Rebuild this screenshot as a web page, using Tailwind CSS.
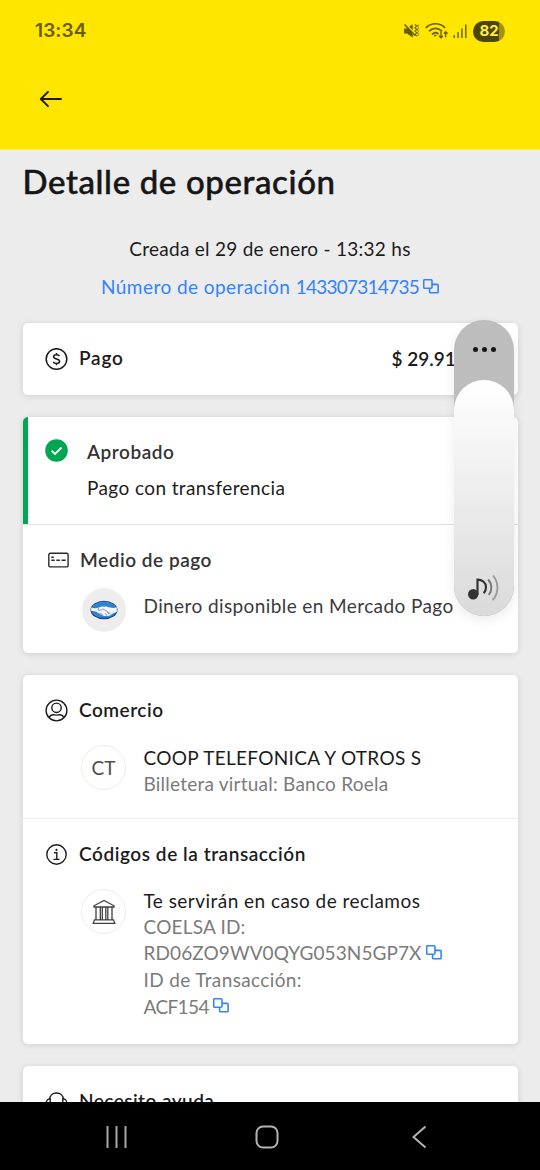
<!DOCTYPE html>
<html lang="es">
<head>
<meta charset="utf-8">
<title>Detalle de operación</title>
<script src="https://cdn.jsdelivr.net/npm/@tailwindcss/browser@4"></script>
</head>
<body class="bg-black">
<svg class="hidden">
  <symbol id="copy" viewBox="0 0 16 15"><path d="M1.600.8h6.500q.9 0 .9.900v6.600q0 .9-.9.900H1.600q-.9 0-.9-.9V1.700q0-.9.900-.9zM9 5.400h5.200q.9 0 .9.900v6.600q0 .9-.9.900H7.500q-.9 0-.9-.9V9.200" fill="none" stroke="currentColor" stroke-width="1.600"/></symbol>
</svg>
<div class="relative flex h-[1170px] w-[540px] flex-col overflow-hidden bg-[#ececec] font-['Lato',sans-serif] text-[19px] text-[#1c1c1c]">
  <header class="h-[150px] shrink-0 border-b border-[#fbeb62] bg-[#ffe600]">
    <div class="flex h-[62px] items-center justify-between px-[35px] text-[#665c00]">
      <span class="pt-px font-['Inter',sans-serif] text-[19px] font-semibold tracking-[0.100px]">13:34</span>
      <div class="flex items-center">
        <svg class="h-[18px] w-[70px]" viewBox="403 22 70 18" fill="none" stroke="#665c00">
          <path d="M404 28.500h3l3.500-2.700 2.200-1.500v13.500l-5.700-4.300h-3z" fill="#665c00" stroke="none"/>
          <path d="M404 22.500l14 14" stroke="#ffe600" stroke-width="1.500"/>
          <path d="M404.500 24.500l10.500 11" stroke-width="1.500"/>
          <path d="M415 24.500l1.800 1.500-1.800 1.700 1.800 1.700-1.800 1.700 1.800 1.700-1.800 1.700 1.800 1.700" stroke-width="1.100"/>
          <path d="M418.600 24.500l-1 1.500 1 1.700-1 1.700 1 1.700-1 1.700 1 1.700-1 1.700" stroke-width=".8"/>
          <path d="M426.500 27.300c5-4.700 13-4.700 18 0M429.500 30.800c3.500-3.200 8.500-3.200 12 0M432.500 34c2-1.600 4-1.600 5.500-.3" stroke-width="1.700" stroke-linecap="round"/>
          <path d="M441 31.500v6.300m-1.900-2 1.900 2 1.900-2M445.700 37.200v-5.400m-1.900 2 1.900-2 1.900 2" stroke-width="1.300"/>
          <path d="M434 35.500h2.300" stroke-width="1.600"/>
          <path d="M454.200 35v3M458 32v6M461.900 28.500v9.500M465.800 24.500v13.500" stroke-width="1.400"/>
        </svg>
        <div class="flex h-[21px] w-[32px] items-center justify-center overflow-hidden rounded-full bg-linear-to-r from-[#4d4500] from-80% to-[#a39300] to-80% font-['Inter',sans-serif] text-[15px] font-bold text-[#ffed4a]"><span>82</span></div>
      </div>
    </div>
    <svg class="ml-[39px] mt-[27px] h-5 w-6" viewBox="0 0 24 20" fill="none" stroke="#1d1a05" stroke-width="1.900" stroke-linecap="round" stroke-linejoin="round"><path d="M22 10H2M9 2.800L1.800 10 9 17.200"/></svg>
  </header>

  <main class="flex h-[952px] shrink-0 flex-col overflow-hidden px-[22.500px]">
    <h1 class="flex h-[62px] shrink-0 items-center pt-[2px] text-[33px] font-medium tracking-[0.620px] text-[#161616] [-webkit-text-stroke:0.500px_#161616]">Detalle de operación</h1>
    <div class="flex h-[111px] shrink-0 flex-col items-center pt-[18px]">
      <p class="flex h-[38px] items-center tracking-[0.270px]">Creada el 29 de enero - 13:32 hs</p>
      <p class="flex h-[38px] items-center gap-[4px] text-[#3483fa]"><span class="tracking-[0.440px]">Número de operación <span class="tracking-[-0.750px]">143307314735</span></span><svg class="mb-0.5 h-[15px] w-4"><use href="#copy"/></svg></p>
    </div>

    <section class="flex h-[72px] shrink-0 items-center rounded-[5px] bg-white pl-[22px] shadow-[0_1px_6px_rgba(0,0,0,0.13)]">
      <svg class="mr-[11.500px] h-[23px] w-[23px]" viewBox="0 0 23 23" fill="none" stroke="#1c1c1c" stroke-width="1.500"><circle cx="11.500" cy="11" r="10.300"/><path d="M14.500 8.100c-.5-1-1.500-1.400-3-1.400-1.700 0-2.900.7-2.900 2 0 3 6 1.400 6 4.500 0 1.400-1.300 2.200-3.100 2.200-1.600 0-2.800-.6-3.200-1.700M11.500 5v2M11.500 15.200v2"/></svg>
      <span class="-mt-px font-semibold tracking-[0.800px]">Pago</span>
      <span class="ml-auto w-[126px] pt-px font-semibold">$ 29.91</span>
    </section>

    <section class="mt-[22px] flex h-[236px] shrink-0 flex-col overflow-hidden rounded-[5px] bg-white shadow-[0_1px_6px_rgba(0,0,0,0.13)]">
      <div class="flex h-[107px] border-l-[5.500px] border-[#00a650] pl-[17px] pt-[16px]">
        <svg class="mr-[19.500px] mt-[6px] h-[23px] w-[23px]" viewBox="0 0 23 23"><circle cx="11.500" cy="11.500" r="11.300" fill="#00a650"/><path d="M6.600 11.700l3.400 3.300 6.500-6.500" fill="none" stroke="#fff" stroke-width="1.800"/></svg>
        <div>
          <p class="flex h-[37px] items-center pt-[2px] font-semibold tracking-[0.550px] text-[#333]">Aprobado</p>
          <p class="flex h-[36px] items-center tracking-[0.400px]">Pago con transferencia</p>
        </div>
      </div>
      <div class="h-[129px] border-t border-[#e4e4e4] pt-[16px]">
        <div class="flex h-[38px] items-center pl-[25.500px]">
          <svg class="mr-[11px] h-4 w-[21px]" viewBox="0 0 21 16" fill="none" stroke="#2b2b2b" stroke-width="1.400"><rect x=".8" y="1.300" width="19.300" height="13.600" rx="1.500"/><path d="M3.300 5.300h2.500M3.300 8.300h3.500M8.300 8.300h3.600M13.500 8.300h4.200"/></svg>
          <span class="font-semibold tracking-[0.530px] text-[#333]">Medio de pago</span>
        </div>
        <div class="flex pl-[59.500px] pt-[8.500px]">
          <div class="mr-[17.500px] flex h-[44px] w-[44px] items-center justify-center rounded-full bg-[#ededed]">
            <svg class="h-[20px] w-[28px]" viewBox="0 0 28 20"><ellipse cx="14" cy="10" rx="13.500" ry="9.300" fill="#24408e"/><ellipse cx="14" cy="9.800" rx="12.600" ry="8.300" fill="#2b84cc"/><path d="M1.200 7.500c3 1.200 5.500 1 8-.2 2-.9 3.200-1 4.800-.5 2.500-.8 4 .2 6 .8 2.300.7 4.500.5 6.800-.3v4.500c-2 .8-4 1.700-6.200 3.200-1.500 1.300-3.500 1-4 .5-1.300 1-3 .6-3.700-.3-1.700.2-2.800-.7-3-1.600-1.500-.2-2.200-.8-3-1.600-1.700-.8-3.500-1-5.700-1z" fill="#f3f5fa"/><path d="M9.200 7.300L8 9.800c1.800 1 3.300.4 4.800-.8 3 1.200 5.500 3 7.800 5M13 15.200c-1-.8-1.500-1.500-2.800-2M15 13.500l2 1.800M17 12.200l2 1.900" fill="none" stroke="#5b6fa8" stroke-width=".7"/></svg>
          </div>
          <span class="flex h-[38px] items-center tracking-[0.400px] text-[#3a3a3a]">Dinero disponible en Mercado Pago</span>
        </div>
      </div>
    </section>

    <section class="mt-[22px] flex h-[369px] shrink-0 flex-col rounded-[5px] bg-white shadow-[0_1px_6px_rgba(0,0,0,0.13)]">
      <div class="h-[143px] pt-[16px]">
        <div class="flex h-[38px] items-center pl-[22px]">
          <svg class="mr-[11.500px] h-[23px] w-[23px]" viewBox="0 0 23 23" fill="none" stroke="#1c1c1c" stroke-width="1.400"><circle cx="11.500" cy="11.500" r="10.400"/><circle cx="11.500" cy="8.800" r="4.700"/><path d="M4.200 18.600c.8-1.900 2.300-2.900 4.200-2.900 1.200.5 5 .5 6.200 0 1.900 0 3.400 1 4.200 2.900"/></svg>
          <span class="font-semibold tracking-[0.500px]">Comercio</span>
        </div>
        <div class="flex pl-[58.500px] pt-[16px]">
          <div class="mr-[17.500px] flex h-[45px] w-[45px] items-center justify-center rounded-full border border-[#ededed] pt-[2px] text-[#4d4d4d]">CT</div>
          <div>
            <p class="flex h-[26px] items-center tracking-[0.320px]">COOP TELEFONICA Y OTROS S</p>
            <p class="flex h-[26px] items-center tracking-[0.230px] text-[#7b7b7b]">Billetera virtual: Banco Roela</p>
          </div>
        </div>
      </div>
      <div class="border-t border-[#ededed] pt-[16px]">
        <div class="flex h-[38px] items-center pl-[22px]">
          <svg class="mr-[11.500px] h-[23px] w-[23px]" viewBox="0 0 23 23" fill="none" stroke="#1c1c1c" stroke-width="1.400"><circle cx="11.500" cy="11.500" r="9.700"/><path d="M9 9.800h2.800v6.400M8.500 16.400h6"/><circle cx="11.500" cy="6.900" r="1.100" fill="#1c1c1c" stroke="none"/></svg>
          <span class="font-semibold tracking-[0.560px]">Códigos de la transacción</span>
        </div>
        <div class="flex pl-[58.500px] pt-[16px]">
          <div class="mr-[17.500px] flex h-[45px] w-[45px] items-center justify-center rounded-full border border-[#ededed]">
            <svg class="h-[26px] w-[24px]" viewBox="0 0 24 26" fill="none" stroke="#404040" stroke-width="1.300"><path d="M2 8V6.800L12 1.500 22 6.800V8zM4 8.500v12M8.300 8.500v12M10.300 8.500v12M13.800 8.500v12M15.800 8.500v12M20 8.500v12M2.500 20.800h19l1.300 3.500H1.200z"/></svg>
          </div>
          <div class="-mt-px">
            <p class="flex h-[26px] items-center tracking-[0.460px]">Te servirán en caso de reclamos</p>
            <div class="text-[#7b7b7b]">
              <p class="flex h-[26px] items-center tracking-[0.200px]">COELSA ID:</p>
              <p class="flex h-[27px] items-center gap-[4px]"><span class="tracking-[0.090px]">RD06ZO9WV0QYG053N5GP7X</span><svg class="mb-0.5 h-[15px] w-4 text-[#3483fa]"><use href="#copy"/></svg></p>
              <p class="flex h-[26px] items-center tracking-[0.360px]">ID de Transacción:</p>
              <p class="flex h-[28px] items-center gap-[4px]"><span class="tracking-[-0.620px]">ACF154</span><svg class="mb-[3px] h-[15px] w-4 text-[#3483fa]"><use href="#copy"/></svg></p>
            </div>
          </div>
        </div>
      </div>
    </section>

    <section class="mt-[22px] h-[90px] shrink-0 rounded-[5px] bg-white pt-[16px] shadow-[0_1px_6px_rgba(0,0,0,0.13)]">
      <div class="flex h-[38px] items-center pl-[22px]">
        <svg class="mr-[11.500px] h-[23px] w-[23px]" viewBox="0 0 23 23" fill="none" stroke="#1c1c1c" stroke-width="1.400"><path d="M4.700 9.500C4.700 5.500 7.500 3 11.500 3s6.800 2.500 6.800 6.500M5.200 9v8.500H4c-1.500 0-2.700-1.500-2.700-4S2.500 9 4 9zM17.800 9v8.500H19c1.500 0 2.700-1.500 2.700-4S20.500 9 19 9z"/></svg>
        <span class="font-semibold tracking-[0.450px]">Necesito ayuda</span>
      </div>
    </section>
  </main>

  <nav class="flex h-[68px] shrink-0 items-center bg-black pl-[105px] pr-[112px]">
    <svg class="mt-px h-6 w-[23px]" viewBox="0 0 23 24" stroke="#a8a8a8" stroke-width="2"><path d="M2.500 1v22M11.500 1v22M20.500 1v22"/></svg>
    <svg class="ml-[127px] mt-px h-6 w-6" viewBox="0 0 24 24" fill="none" stroke="#b4b4b4" stroke-width="2"><rect x="1.500" y="1.500" width="21" height="21" rx="6.500"/></svg>
    <svg class="ml-auto mt-px h-6 w-4" viewBox="0 0 16 24" fill="none" stroke="#b4b4b4" stroke-width="2"><path d="M13.500 1.500L1.500 12l12 10.500"/></svg>
  </nav>

  <!-- Volume slider overlay -->
  <div class="absolute left-[454px] top-[320px] h-[296px] w-[60px] overflow-hidden rounded-full bg-[#bdbdbd] shadow-[0_4px_12px_rgba(0,0,0,0.08)]">
    <div class="flex h-[60px] items-center justify-center gap-[4px]">
      <i class="-mt-px size-[5px] rounded-full bg-[#161616]"></i><i class="-mt-px size-[5px] rounded-full bg-[#161616]"></i><i class="-mt-px size-[5px] rounded-full bg-[#161616]"></i>
    </div>
    <div class="flex h-[236px] items-end justify-center rounded-full bg-linear-to-b from-white to-[#dadada] pb-[14px]">
      <svg class="h-[28px] w-[32px]" viewBox="467.500 573.500 32 28" fill="none" stroke="#333"><circle cx="472.700" cy="593.700" r="5.200" fill="#333" stroke="none"/><path d="M477 594v-14.900c5 0 8.500 3.200 8.500 7.400 0 2.800-.9 4.800-2.300 6.200" stroke-width="2.200"/><path d="M487.500 579c4.300 4.500 4.300 11 .8 15.500" stroke="#777" stroke-width="1.900"/><path d="M492.500 575c6 7 6 17.500-.3 24.500" stroke="#999" stroke-width="1.900"/></svg>
    </div>
  </div>
</div>
</body>
</html>
